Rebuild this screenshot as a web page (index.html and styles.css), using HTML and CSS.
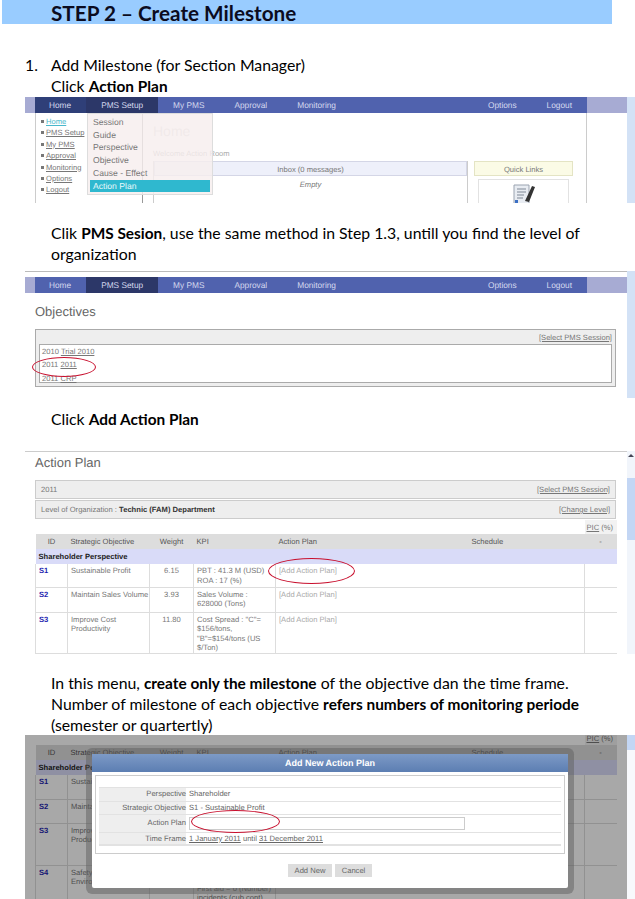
FILE: index.html
```html
<!DOCTYPE html>
<html lang="en">
    <head>
        <meta charset="UTF-8">
        <title>STEP 2 - Create Milestone</title>
        <link rel="stylesheet" href="styles.css">
    </head>
    <body>

        <h1 class="step-title">STEP 2 – Create Milestone</h1>

        <div class="note note-first">
            <span class="note-num">1.</span>
            Add Milestone (for Section Manager)<br>
            Click <b>Action Plan</b>
        </div>

        <!-- shot 1 : home with menu open -->
        <div class="shot shot-home">
            <div class="shot-main">
                <div class="nav-band">
                    <div class="nav">
                        <span class="nav-item nav-home">Home</span>
                        <span class="nav-item nav-active">PMS Setup</span>
                        <span class="nav-item">My PMS</span>
                        <span class="nav-item">Approval</span>
                        <span class="nav-item">Monitoring</span>
                        <span class="nav-item nav-push">Options</span>
                        <span class="nav-item">Logout</span>
                    </div>
                </div>
                <div class="home-body">
                    <ul class="side-menu">
                        <li><a class="side-current">Home</a></li>
                        <li><a>PMS Setup</a></li>
                        <li><a>My PMS</a></li>
                        <li><a>Approval</a></li>
                        <li><a>Monitoring</a></li>
                        <li><a>Options</a></li>
                        <li><a>Logout</a></li>
                    </ul>
                    <div class="home-content">
                        <p class="home-heading">Home</p>
                        <p class="home-welcome">Welcome Action Room</p>
                        <div class="home-panels">
                            <div class="panel-inbox">
                                <div class="panel-head">Inbox (0 messages)</div>
                                <div class="panel-empty">Empty</div>
                            </div>
                            <div class="panel-links">
                                <div class="panel-head panel-head-yellow">Quick Links</div>
                                <div class="links-box">
                                    <svg class="links-icon" viewBox="0 0 26 20">
                                        <path d="M3 1h15v19H3z" fill="#e8ecf2" stroke="#9aa3b0"/>
                                        <path d="M6 5h9M6 8h9M6 11h7M6 14h6" stroke="#7f8896"/>
                                        <path d="M14 17L21 2l3 1-6 15z" fill="#333"/>
                                        <path d="M4 16h3v3H4z" fill="#3b6fc4"/>
                                    </svg>
                                </div>
                            </div>
                        </div>
                    </div>
                </div>
            </div>
            <div class="scroll-strip"></div>

            <ul class="drop-menu">
                <li>Session</li>
                <li>Guide</li>
                <li>Perspective</li>
                <li>Objective</li>
                <li>Cause - Effect</li>
                <li class="drop-active">Action Plan</li>
            </ul>
        </div>

        <div class="note note-second">
            Clik <b>PMS Sesion</b>, use the same method in Step 1.3, untill you find the level of<br>
            organization
        </div>

        <!-- shot 2 : objectives -->
        <div class="shot shot-objectives">
            <div class="shot-main">
                <div class="nav-band">
                    <div class="nav">
                        <span class="nav-item nav-first">Home</span>
                        <span class="nav-item nav-active">PMS Setup</span>
                        <span class="nav-item">My PMS</span>
                        <span class="nav-item">Approval</span>
                        <span class="nav-item">Monitoring</span>
                        <span class="nav-item nav-push">Options</span>
                        <span class="nav-item">Logout</span>
                    </div>
                </div>
                <p class="page-heading">Objectives</p>
                <div class="session-box">
                    <div class="session-head"><a>[Select PMS Session]</a></div>
                    <div class="session-list">
                        <div>2010 <a>Trial 2010</a></div>
                        <div>2011 <a>2011</a></div>
                        <div>2011 <a>CRP</a></div>
                    </div>
                </div>
            </div>
            <div class="scroll-strip"></div>
            <div class="ring ring-session"></div>
        </div>

        <div class="note note-third">
            Click <b>Add Action Plan</b>
        </div>

        <!-- shot 3 : action plan table -->
        <div class="shot shot-plan">
            <div class="shot-main">
                <p class="page-heading plan-heading">Action Plan</p>
                <div class="info-bar"><span>2011</span><a>[Select PMS Session]</a></div>
                <div class="info-bar"><span>Level of Organization : <b>Technic (FAM) Department</b></span><a>[Change Level]</a></div>
                <table class="plan-table">
                    <colgroup>
                        <col class="col-id"><col class="col-so"><col class="col-weight"><col class="col-kpi">
                        <col class="col-plan"><col class="col-sched"><col class="col-pic">
                    </colgroup>
                    <tr class="row-pic">
                        <td colspan="6"></td>
                        <td class="pic-cell"><a>PIC</a> (%)</td>
                    </tr>
                    <tr class="row-head">
                        <td class="center">ID</td><td>Strategic Objective</td><td class="center">Weight</td><td>KPI</td>
                        <td>Action Plan</td><td>Schedule</td><td class="center">-</td>
                    </tr>
                    <tr class="row-section"><td colspan="7">Shareholder Perspective</td></tr>
                    <tr class="row-s1">
                        <td class="obj-id">S1</td><td>Sustainable Profit</td><td class="center">6.15</td>
                        <td>PBT : 41.3 M (USD)<br>ROA : 17 (%)</td>
                        <td colspan="2" class="add-plan">[Add Action Plan]</td><td></td>
                    </tr>
                    <tr class="row-s2">
                        <td class="obj-id">S2</td><td>Maintain Sales Volume</td><td class="center">3.93</td>
                        <td>Sales Volume :<br>628000 (Tons)</td>
                        <td colspan="2" class="add-plan">[Add Action Plan]</td><td></td>
                    </tr>
                    <tr class="row-s3">
                        <td class="obj-id">S3</td><td>Improve Cost<br>Productivity</td><td class="center">11.80</td>
                        <td>Cost Spread : "C"=<br>$156/tons,<br>"B"=$154/tons (US<br>$/Ton)</td>
                        <td colspan="2" class="add-plan">[Add Action Plan]</td><td></td>
                    </tr>
                </table>
            </div>
            <div class="scroll-strip scroll-plan">
                <div class="scroll-arrow"></div>
                <div class="scroll-thumb"></div>
            </div>
            <div class="ring ring-plan"></div>
        </div>

        <div class="note note-fourth">
            In this menu, <b>create only the milestone</b> of the objective dan the time frame.<br>
            Number of milestone of each objective <b>refers numbers of monitoring periode</b><br>
            (semester or quartertly)
        </div>

        <!-- shot 4 : add new action plan dialog -->
        <div class="shot shot-dialog">
            <div class="shot-main">
                <table class="plan-table dialog-table">
                    <colgroup>
                        <col class="col-id"><col class="col-so"><col class="col-weight"><col class="col-kpi">
                        <col class="col-plan"><col class="col-sched"><col class="col-pic">
                    </colgroup>
                    <tr class="row-pic">
                        <td colspan="6"></td>
                        <td class="pic-cell"><a>PIC</a> (%)</td>
                    </tr>
                    <tr class="row-head">
                        <td class="center">ID</td><td>Strategic Objective</td><td class="center">Weight</td><td>KPI</td>
                        <td>Action Plan</td><td>Schedule</td><td class="center">-</td>
                    </tr>
                    <tr class="row-section"><td colspan="7">Shareholder Perspective</td></tr>
                    <tr class="row-d1"><td class="obj-id">S1</td><td>Sustainable Profit</td><td></td><td></td><td colspan="2"></td><td></td></tr>
                    <tr class="row-d2"><td class="obj-id">S2</td><td>Maintain Sales Volume</td><td></td><td></td><td colspan="2"></td><td></td></tr>
                    <tr class="row-d3"><td class="obj-id">S3</td><td>Improve Cost<br>Productivity</td><td></td><td></td><td colspan="2"></td><td></td></tr>
                    <tr class="row-d4">
                        <td class="obj-id">S4</td><td>Safety &amp;<br>Environment</td><td></td>
                        <td class="kpi-low">First aid = 0 (Number)<br>incidents (cub.cont)</td>
                        <td colspan="2"></td><td></td>
                    </tr>
                </table>
                <div class="dim-layer"></div>
            </div>
            <div class="scroll-strip scroll-dialog"><div class="scroll-dialog-thumb"></div></div>

            <div class="dialog">
                <div class="dialog-title">Add New Action Plan</div>
                <div class="dialog-box">
                    <div class="form-row form-row-first">
                        <span class="form-label">Perspective</span><span>Shareholder</span>
                    </div>
                    <div class="form-row">
                        <span class="form-label">Strategic Objective</span><span>S1 - Sustainable Profit</span>
                    </div>
                    <div class="form-row form-row-input">
                        <span class="form-label">Action Plan</span><span class="form-input"></span>
                    </div>
                    <div class="form-row form-row-last">
                        <span class="form-label">Time Frame</span><span><a>1 January 2011</a> until <a>31 December 2011</a></span>
                    </div>
                </div>
                <div class="dialog-buttons">
                    <span class="dialog-btn btn-add">Add New</span>
                    <span class="dialog-btn btn-cancel">Cancel</span>
                </div>
            </div>
            <div class="ring ring-dialog"></div>
        </div>

    </body>
</html>
```

FILE: styles.css
```css
html, body
{
    margin: 0;
    padding: 0;
}
body
{
    width: 635px;
    height: 899px;
    overflow: hidden;
    background-color: white;
    color: black;
    font-family: "Lato", "Liberation Sans", sans-serif;
}
p, ul
{
    margin: 0;
    padding: 0;
}
li
{
    list-style: none;
}
a
{
    text-decoration: underline;
}

/* document text */
.step-title
{
    margin: 0 0 0 2px;
    width: 610px;
    height: 24px;
    padding-left: 49px;
    box-sizing: border-box;
    background-color: #99ccff;
    font-size: 20.7px;
    line-height: 27px;
    font-weight: bold;
    color: #0b0b20;
}
.note
{
    position: relative;
    padding: 0 0 1px 51px;
    font-size: 15.8px;
    line-height: 21px;
    white-space: nowrap;
}
.note b
{
    font-size: 15.4px;
    line-height: 1;
}
.note-num
{
    position: absolute;
    left: 25px;
}
.note-first { margin-top: 30px; }
.note-second { margin-top: 19px; }
.note-third { margin-top: 10px; }
.note-fourth { margin-top: 18px; }

/* screenshots */
.shot
{
    position: relative;
    display: flex;
    margin-left: 25px;
    width: 610px;
    overflow: hidden;
    font-family: "Liberation Sans", Arial, sans-serif;
    font-size: 7.6px;
    text-rendering: geometricPrecision;
    color: #777;
}
.shot-main
{
    position: relative;
    width: 602px;
    flex: none;
}
.scroll-strip
{
    width: 8px;
    flex: none;
    background-color: #d3e2f6;
}
.shot-home { height: 106px; }
.shot-objectives { height: 127px; margin-top: 6px; }
.shot-plan { height: 203px; margin-top: 21px; }
.shot-dialog { height: 164px; margin-top: -1px; }

.nav-band
{
    height: 16px;
    background-color: #a7abd3;
    padding-left: 10px;
}
.nav
{
    display: flex;
    width: 552px;
    height: 16px;
    background-color: #5062ae;
    color: #d5d9ee;
    font-size: 8.3px;
    line-height: 16px;
}
.nav-item
{
    padding: 0 15px;
}
.nav-home, .nav-first
{
    padding-left: 14px;
}
.nav-home
{
    background-color: #2f3f78;
}
.nav-active
{
    background-color: #2c3768;
}
.nav-push
{
    margin-left: auto;
}

/* shot 1 */
.home-body
{
    display: flex;
    margin-left: 10px;
    width: 552px;
    height: 90px;
    border-left: 1px solid #ccc;
    border-right: 1px solid #ccc;
    box-sizing: border-box;
}
.side-menu
{
    width: 107px;
    height: 90px;
    flex: none;
    box-sizing: border-box;
    padding: 3px 0 0 9px;
    border-right: 1px solid #999;
    line-height: 11.4px;
}
.side-menu li::before
{
    content: "";
    display: inline-block;
    width: 3px;
    height: 3px;
    margin: 0 2px 1px -4px;
    background-color: #777;
}
.side-current
{
    color: #49b8cc;
}
.home-content
{
    padding-left: 10px;
    flex: 1;
}
.home-heading
{
    margin-top: 10px;
    font-size: 14px;
    line-height: 17px;
    color: #d4d4d4;
}
.home-welcome
{
    margin-top: 9px;
    line-height: 10px;
    color: #aaa;
}
.home-panels
{
    display: flex;
    gap: 6px;
    margin-top: 2px;
}
.panel-inbox
{
    width: 315px;
    height: 50px;
    border-left: 1px solid #ccc;
    border-right: 1px solid #ccc;
    box-sizing: border-box;
    text-align: center;
}
.panel-links
{
    width: 99px;
    text-align: center;
}
.panel-head
{
    height: 15px;
    line-height: 15px;
    background-color: #eef0fa;
    border: 1px solid #d4d6e6;
    box-sizing: border-box;
}
.panel-head-yellow
{
    background-color: #fbfbe6;
    border-color: #e4e4c4;
}
.panel-empty
{
    margin-top: 4px;
    font-style: italic;
}
.links-box
{
    margin: 3px 4px 0;
    height: 30px;
    padding-top: 4px;
    box-sizing: border-box;
    border: 1px solid #e2e2e2;
}
.links-icon
{
    display: block;
    margin: 0 auto;
    width: 26px;
    height: 20px;
}
.drop-menu
{
    position: absolute;
    left: 62px;
    top: 16px;
    width: 126px;
    height: 82px;
    box-sizing: border-box;
    padding: 2px 2px 3px;
    background-color: rgba(246, 238, 238, 0.82);
    border: 1px solid #ddd;
    font-size: 8.6px;
    line-height: 12.7px;
}
.drop-menu li
{
    padding-left: 3px;
}
.drop-menu .drop-active
{
    background-color: #2fb8cf;
    color: #e8f8fb;
}

/* shot 2 */
.page-heading
{
    padding-left: 10px;
    font-size: 13px;
    line-height: 17px;
    color: #666;
}
.shot-objectives .nav-band
{
    margin-top: 5px;
}
.shot-objectives .shot-main
{
    border-top: 1px solid #bbb;
    box-sizing: border-box;
}
.shot-objectives .page-heading
{
    margin-top: 10px;
}
.session-box
{
    margin: 9px 0 0 10px;
    width: 581px;
    height: 58px;
    box-sizing: border-box;
    border: 1px solid #aaa;
    background-color: #eee;
    padding: 0 3px;
}
.session-head
{
    height: 14px;
    line-height: 15px;
    text-align: right;
}
.session-list
{
    height: 39px;
    padding: 0 0 0 2px;
    box-sizing: border-box;
    border: 1px solid #aaa;
    background-color: white;
    line-height: 13.3px;
}

/* shot 3 */
.shot-plan .shot-main
{
    border-top: 1px solid #ccc;
    box-sizing: border-box;
}
.plan-heading
{
    margin-top: 2px;
}
.info-bar
{
    display: flex;
    justify-content: space-between;
    margin: 0 0 1px 10px;
    width: 581px;
    height: 19px;
    box-sizing: border-box;
    padding: 0 5px;
    border: 1px solid #ccc;
    background-color: #eee;
    line-height: 18px;
}
.info-bar b
{
    color: #333;
}
.plan-heading + .info-bar
{
    margin-top: 9px;
}
.plan-table
{
    margin-left: 10px;
    width: 581px;
    table-layout: fixed;
    border-collapse: collapse;
    background-color: white;
    line-height: 9.6px;
}
.plan-table td
{
    padding: 2px 0 0 3px;
    vertical-align: top;
    box-sizing: border-box;
    border-left: 1px solid #ddd;
    border-bottom: 1px solid #ddd;
    overflow: hidden;
    white-space: nowrap;
}
.col-id { width: 32px; }
.col-so { width: 82px; }
.col-weight { width: 44px; }
.col-kpi { width: 82px; }
.col-plan { width: 193px; }
.col-sched { width: 116px; }
.col-pic { width: 32px; }
.plan-table .center
{
    padding-left: 0;
    text-align: center;
}
.plan-table .row-pic td
{
    height: 14px;
    padding: 0;
    border: 0;
}
.plan-table .row-pic .pic-cell
{
    padding: 3px 0 0 2px;
    background-color: #f2f2f2;
}
.plan-table .row-head td
{
    height: 15px;
    padding-top: 3px;
    background-color: #ddd;
    border: 0;
    color: #555;
}
.plan-table .row-section td
{
    height: 15px;
    padding-top: 3px;
    background-color: #d9dbf8;
    border: 0;
    font-weight: bold;
    color: #222;
}
.obj-id
{
    font-weight: bold;
    color: #1f1fb0;
}
.add-plan
{
    color: #aaa;
}
.row-s1 td { height: 23px; }
.row-s2 td { height: 25px; }
.row-s3 td { height: 41px; }
.scroll-plan
{
    background-color: #f1f5fb;
}
.scroll-arrow
{
    width: 0;
    height: 0;
    margin: 3px auto 0;
    border-left: 3px solid transparent;
    border-right: 3px solid transparent;
    border-bottom: 3px solid #445;
}
.scroll-thumb
{
    margin-top: 21px;
    height: 62px;
    background-color: #c3d6f4;
}

/* shot 4 */
.plan-table.dialog-table .row-pic td
{
    height: 10px;
}
.plan-table.dialog-table .row-pic .pic-cell
{
    padding-top: 0;
    line-height: 8px;
}
.row-d1 td { height: 24px; }
.row-d2 td { height: 24px; }
.row-d3 td { height: 42px; }
.row-d4 td { height: 34px; }
.plan-table .kpi-low
{
    padding-top: 18px;
}
.dim-layer
{
    position: absolute;
    left: 0;
    top: 0;
    right: 0;
    bottom: 0;
    background-color: rgba(0, 0, 0, 0.34);
}
.scroll-dialog
{
    background-color: #f8f9fc;
}
.scroll-dialog-thumb
{
    height: 15px;
    background-color: #c3d6f4;
}
.dialog
{
    position: absolute;
    left: 67px;
    top: 19px;
    width: 476px;
    height: 134px;
    background-color: white;
    box-shadow: 0 0 0 6px rgba(95, 95, 95, 0.5);
    border-radius: 2px;
    color: #666;
}
.dialog-title
{
    height: 18px;
    background: linear-gradient(#7d9ac6, #5c7eb2);
    color: white;
    font-size: 9px;
    font-weight: bold;
    line-height: 18px;
    text-align: center;
}
.dialog-box
{
    margin: 3px 3px 0;
    height: 79px;
    box-sizing: border-box;
    padding: 11px 3px 0;
    border: 1px solid #ccc;
}
.form-row
{
    display: flex;
    gap: 3px;
    height: 13px;
    box-sizing: border-box;
    line-height: 12px;
    border-top: 1px solid #e2e2e2;
    white-space: nowrap;
}
.form-row-first
{
    height: 14px;
}
.form-row-input
{
    height: 18px;
    line-height: 16px;
}
.form-row-last
{
    height: 14px;
    border-bottom: 2px solid #e2e2e2;
}
.form-label
{
    width: 87px;
    flex: none;
    background-color: #eee;
    text-align: right;
}
.form-input
{
    width: 276px;
    height: 13px;
    margin-top: 2px;
    box-sizing: border-box;
    border: 1px solid #ccc;
}
.dialog-buttons
{
    display: flex;
    gap: 3px;
    margin: 10px 0 0 196px;
}
.dialog-btn
{
    height: 13px;
    line-height: 13px;
    background-color: #ddd;
    text-align: center;
}
.btn-add { width: 44px; }
.btn-cancel { width: 37px; }

/* red hand drawn circles */
.ring
{
    position: absolute;
    box-sizing: border-box;
    border: 1px solid #c8102e;
    border-radius: 50%;
}
.ring-session
{
    left: 7px;
    top: 86px;
    width: 64px;
    height: 20px;
}
.ring-plan
{
    left: 243px;
    top: 107px;
    width: 87px;
    height: 26px;
}
.ring-dialog
{
    left: 166px;
    top: 75px;
    width: 89px;
    height: 23px;
}
```
